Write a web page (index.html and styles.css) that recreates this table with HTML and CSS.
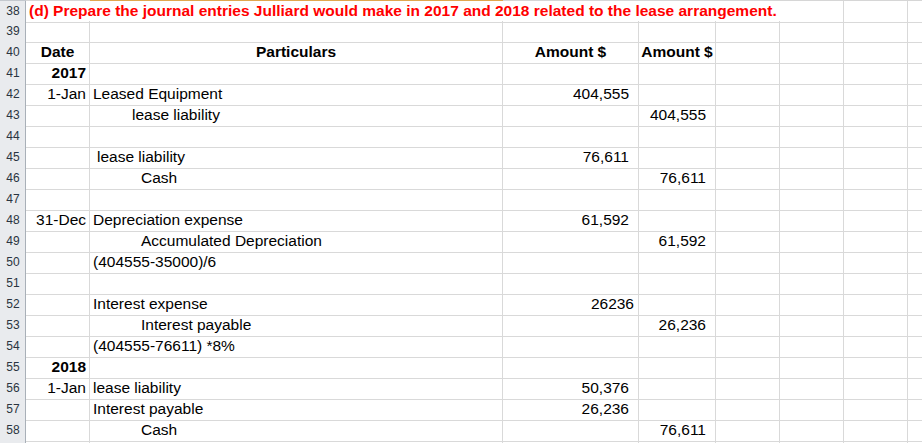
FILE: index.html
```html
<!DOCTYPE html>
<html lang="en">
<head>
<meta charset="utf-8">
<title>Journal entries</title>
<link rel="stylesheet" href="styles.css">
</head>
<body>
<div class="sheet">
  <div class="row edge">
    <div class="hd"></div><div class="c"></div><div class="c sel"></div><div class="c"></div><div class="c"></div><div class="c"></div><div class="c"></div><div class="c"></div><div class="c"></div>
  </div>
  <div class="row first">
    <div class="hd">38</div><div class="c title span6">(d) Prepare the journal entries Julliard would make in 2017 and 2018 related to the lease arrangement.</div><div class="c"></div><div class="c"></div>
  </div>
  <div class="row">
    <div class="hd">39</div><div class="c"></div><div class="c"></div><div class="c"></div><div class="c"></div><div class="c"></div><div class="c"></div><div class="c"></div><div class="c"></div>
  </div>
  <div class="row">
    <div class="hd">40</div><div class="c b ctr">Date</div><div class="c b ctr">Particulars</div><div class="c b ctr">Amount $</div><div class="c b ctr">Amount $</div><div class="c"></div><div class="c"></div><div class="c"></div><div class="c"></div>
  </div>
  <div class="row">
    <div class="hd">41</div><div class="c b r">2017</div><div class="c"></div><div class="c"></div><div class="c"></div><div class="c"></div><div class="c"></div><div class="c"></div><div class="c"></div>
  </div>
  <div class="row">
    <div class="hd">42</div><div class="c r">1-Jan</div><div class="c l">Leased Equipment</div><div class="c num">404,555</div><div class="c"></div><div class="c"></div><div class="c"></div><div class="c"></div><div class="c"></div>
  </div>
  <div class="row">
    <div class="hd">43</div><div class="c"></div><div class="c l i2">lease liability</div><div class="c"></div><div class="c num">404,555</div><div class="c"></div><div class="c"></div><div class="c"></div><div class="c"></div>
  </div>
  <div class="row">
    <div class="hd">44</div><div class="c"></div><div class="c"></div><div class="c"></div><div class="c"></div><div class="c"></div><div class="c"></div><div class="c"></div><div class="c"></div>
  </div>
  <div class="row">
    <div class="hd">45</div><div class="c"></div><div class="c l i1">lease liability</div><div class="c num">76,611</div><div class="c"></div><div class="c"></div><div class="c"></div><div class="c"></div><div class="c"></div>
  </div>
  <div class="row">
    <div class="hd">46</div><div class="c"></div><div class="c l i3">Cash</div><div class="c"></div><div class="c num">76,611</div><div class="c"></div><div class="c"></div><div class="c"></div><div class="c"></div>
  </div>
  <div class="row">
    <div class="hd">47</div><div class="c"></div><div class="c"></div><div class="c"></div><div class="c"></div><div class="c"></div><div class="c"></div><div class="c"></div><div class="c"></div>
  </div>
  <div class="row">
    <div class="hd">48</div><div class="c r">31-Dec</div><div class="c l">Depreciation expense</div><div class="c num">61,592</div><div class="c"></div><div class="c"></div><div class="c"></div><div class="c"></div><div class="c"></div>
  </div>
  <div class="row">
    <div class="hd">49</div><div class="c"></div><div class="c l i3">Accumulated Depreciation</div><div class="c"></div><div class="c num">61,592</div><div class="c"></div><div class="c"></div><div class="c"></div><div class="c"></div>
  </div>
  <div class="row">
    <div class="hd">50</div><div class="c"></div><div class="c l">(404555-35000)/6</div><div class="c"></div><div class="c"></div><div class="c"></div><div class="c"></div><div class="c"></div><div class="c"></div>
  </div>
  <div class="row">
    <div class="hd">51</div><div class="c"></div><div class="c"></div><div class="c"></div><div class="c"></div><div class="c"></div><div class="c"></div><div class="c"></div><div class="c"></div>
  </div>
  <div class="row">
    <div class="hd">52</div><div class="c"></div><div class="c l">Interest expense</div><div class="c num plain">26236</div><div class="c"></div><div class="c"></div><div class="c"></div><div class="c"></div><div class="c"></div>
  </div>
  <div class="row">
    <div class="hd">53</div><div class="c"></div><div class="c l i3">Interest payable</div><div class="c"></div><div class="c num">26,236</div><div class="c"></div><div class="c"></div><div class="c"></div><div class="c"></div>
  </div>
  <div class="row">
    <div class="hd">54</div><div class="c"></div><div class="c l">(404555-76611) *8%</div><div class="c"></div><div class="c"></div><div class="c"></div><div class="c"></div><div class="c"></div><div class="c"></div>
  </div>
  <div class="row">
    <div class="hd">55</div><div class="c b r">2018</div><div class="c"></div><div class="c"></div><div class="c"></div><div class="c"></div><div class="c"></div><div class="c"></div><div class="c"></div>
  </div>
  <div class="row">
    <div class="hd">56</div><div class="c r">1-Jan</div><div class="c l">lease liability</div><div class="c num">50,376</div><div class="c"></div><div class="c"></div><div class="c"></div><div class="c"></div><div class="c"></div>
  </div>
  <div class="row">
    <div class="hd">57</div><div class="c"></div><div class="c l">Interest payable</div><div class="c num">26,236</div><div class="c"></div><div class="c"></div><div class="c"></div><div class="c"></div><div class="c"></div>
  </div>
  <div class="row">
    <div class="hd">58</div><div class="c"></div><div class="c l i3">Cash</div><div class="c"></div><div class="c num">76,611</div><div class="c"></div><div class="c"></div><div class="c"></div><div class="c"></div>
  </div>
  <div class="row">
    <div class="hd"></div><div class="c"></div><div class="c"></div><div class="c"></div><div class="c"></div><div class="c"></div><div class="c"></div><div class="c"></div><div class="c"></div>
  </div>
</div>
</body>
</html>
```

FILE: styles.css
```css
html, body {
  margin: 0;
  padding: 0;
  background: #ffffff;
  overflow: hidden;
}

.sheet {
  width: 1000px;
  font-family: "Liberation Sans", Arial, sans-serif;
  font-size: 15.5px;
  color: #000000;
}

.row {
  display: grid;
  grid-template-columns: 26px 64px 413px 136px 77px 64px 64px 64px 64px;
  height: 21px;
}

.row.edge {
  height: 1px;
}

.row.edge .hd,
.row.edge .c {
  border: 0;
  background: #d6d6d6;
}

.row.edge .hd {
  background: #c3c8ce;
}

.row.edge .c.sel {
  background: #e0a64e;
}

.row.first {
  height: 20px;
}

.hd {
  box-sizing: border-box;
  background: #e9ebee;
  border-right: 1px solid #a9b0b8;
  border-bottom: 1px solid #c6cbd1;
  font-size: 12px;
  color: #2a3440;
  text-align: center;
  line-height: 21px;
  padding-left: 1px;
}

.c {
  box-sizing: border-box;
  border-right: 1px solid #d9d9d9;
  border-bottom: 1px solid #d9d9d9;
  line-height: 20px;
  white-space: nowrap;
  overflow: visible;
}

.span6 {
  grid-column: span 6;
}

.title {
  color: #ff0000;
  font-weight: bold;
  padding-left: 3px;
}

.b {
  font-weight: bold;
}

.ctr {
  text-align: center;
}

.r {
  text-align: right;
  padding-right: 3px;
}

.l {
  padding-left: 3px;
}

.i1 {
  padding-left: 7px;
}

.i2 {
  padding-left: 42px;
}

.i3 {
  padding-left: 51px;
}

.num {
  text-align: right;
  padding-right: 9px;
}

.num.plain {
  padding-right: 4px;
}
```
